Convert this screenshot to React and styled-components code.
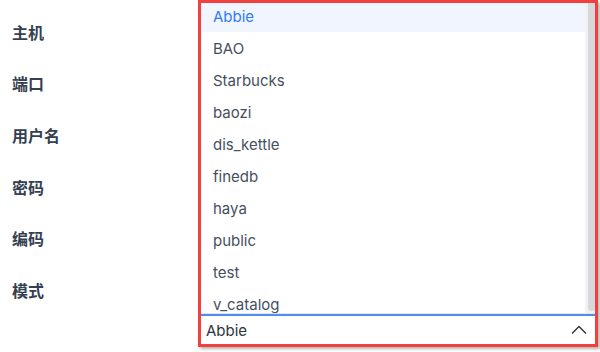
import React from 'react';
import styled, { createGlobalStyle } from 'styled-components';

const GlobalStyle = createGlobalStyle`
  html, body {
    margin: 0;
    padding: 0;
    background: #ffffff;
  }
  * {
    box-sizing: border-box;
  }
`

const Page = styled.div`
  display: flex;
  height: 352px;
  width: 600px;
  font-family: Inter, 'Noto Sans CJK SC', sans-serif;
  background: #ffffff;
`

const LabelColumn = styled.div`
  display: flex;
  flex-direction: column;
  width: 198px;
  padding: 6px 0 0 12px;
`

const Label = styled.div`
  height: 51.6px;
  display: flex;
  align-items: center;
  font-family: 'Noto Sans CJK SC', sans-serif;
  font-size: 16px;
  font-weight: 700;
  color: #353f52;
`

const SelectPanel = styled.div`
  display: flex;
  flex-direction: column;
  width: 400px;
  height: 347px;
  border: 3px solid #f2403f;
  background: #ffffff;
  box-shadow: 2px 2px 3px rgba(0, 0, 0, 0.3);
`

const ListArea = styled.div`
  display: flex;
  height: 311px;
  overflow: hidden;
  border-bottom: 1px solid #e3e5e8;
`

const Options = styled.ul`
  flex: 1;
  list-style: none;
  margin: -3px 0 0 0;
  padding: 0;
`

const Option = styled.li`
  height: 32px;
  display: flex;
  align-items: center;
  padding-left: 12px;
  font-size: 15px;
  color: ${(p) => (p.$active ? '#2f7cf6' : '#45505f')};
  background: ${(p) => (p.$active ? '#f0f5ff' : 'transparent')};
`

const ScrollTrack = styled.div`
  width: 10px;
  background: #f2f2f3;
  padding: 0 0 2px 3px;
  display: flex;
`

const ScrollThumb = styled.div`
  flex: 1;
  background: #d8d8dc;
  border-radius: 0 0 4px 4px;
`

const Field = styled.div`
  flex: 1;
  display: flex;
  align-items: center;
  justify-content: space-between;
  padding: 0 8px 0 5px;
  border-top: 2px solid #4d8ef0;
  font-size: 15px;
  color: #2e3440;
`

const Chevron = () => (
  <svg width="16" height="10" viewBox="0 0 16 10">
    <path d="M1 8.5 L8 1.5 L15 8.5" fill="none" stroke="#333a44" strokeWidth="1.5" />
  </svg>
)

const labels = ['主机', '端口', '用户名', '密码', '编码', '模式'];
const schemas = ['Abbie', 'BAO', 'Starbucks', 'baozi', 'dis_kettle', 'finedb', 'haya', 'public', 'test', 'v_catalog'];

export default function App() {
  return (
    <>
      <GlobalStyle />
      <Page>
        <LabelColumn>
          {labels.map((l) => (
            <Label key={l}>{l}</Label>
          ))}
        </LabelColumn>
        <SelectPanel>
          <ListArea>
            <Options>
              {schemas.map((s, i) => (
                <Option key={s} $active={i === 0}>{s}</Option>
              ))}
            </Options>
            <ScrollTrack>
              <ScrollThumb />
            </ScrollTrack>
          </ListArea>
          <Field>
            <span>Abbie</span>
            <Chevron />
          </Field>
        </SelectPanel>
      </Page>
    </>
  );
}
